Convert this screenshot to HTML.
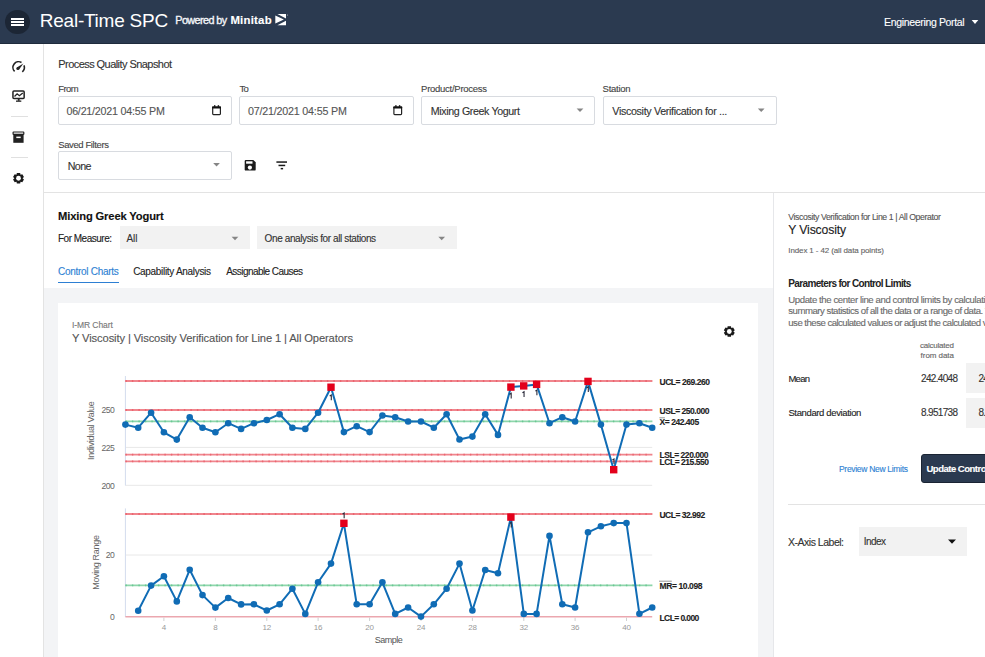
<!DOCTYPE html>
<html><head><meta charset="utf-8">
<style>
html,body{margin:0;padding:0;}
body{width:985px;height:657px;position:relative;overflow:hidden;background:#fff;font-family:"Liberation Sans", sans-serif;}
.a{position:absolute;box-sizing:border-box;}
.t{position:absolute;white-space:nowrap;font-family:"Liberation Sans", sans-serif;-webkit-text-stroke:0.12px currentColor;}
svg{position:absolute;left:0;top:0;}
</style></head><body>
<!-- header -->
<div class="a" style="left:0;top:0;width:985px;height:44px;background:#2b3a50;"></div>
<div class="a" style="left:0;top:43px;width:985px;height:1px;background:#1f2b3c;"></div>
<div class="a" style="left:5.3px;top:9.6px;width:24.8px;height:24.8px;border-radius:50%;background:#1c2635;"></div>
<div class="a" style="left:11px;top:17.6px;width:12.8px;height:2px;background:#fff;"></div>
<div class="a" style="left:11px;top:20.8px;width:12.8px;height:2px;background:#fff;"></div>
<div class="a" style="left:11px;top:24px;width:12.8px;height:2px;background:#fff;"></div>
<svg width="985" height="657" viewBox="0 0 985 657">
  <!-- minitab logo -->
  <path d="M275.3 15.6 L283.9 19.6 L275.3 23.6 Z" fill="#fff"/>
  <path d="M277.4 14 L286 14 L286 18.5 Z" fill="#fff"/>
  <path d="M277.4 25.2 L286 25.2 L286 20.7 Z" fill="#fff"/>
  <circle cx="287.6" cy="14.9" r="0.5" fill="#ccc"/>
  <!-- engineering portal caret -->
  <path d="M971.7 20 L978.3 20 L975 24.1 Z" fill="#fff"/>
</svg>

<!-- sidebar -->
<div class="a" style="left:43px;top:44px;width:1px;height:613px;background:#e3e3e3;"></div>
<div class="a" style="left:11px;top:116px;width:17px;height:1px;background:#e0e0e0;"></div>
<div class="a" style="left:11px;top:157px;width:17px;height:1px;background:#e0e0e0;"></div>

<!-- filter inputs -->
<div class="a" style="left:58px;top:96px;width:174px;height:29px;border:1px solid #d8dbe0;border-radius:2px;"></div>
<div class="a" style="left:239.3px;top:96px;width:174.7px;height:29px;border:1px solid #d8dbe0;border-radius:2px;"></div>
<div class="a" style="left:421px;top:96px;width:174px;height:29px;border:1px solid #d8dbe0;border-radius:2px;"></div>
<div class="a" style="left:602.5px;top:96px;width:174px;height:29px;border:1px solid #d8dbe0;border-radius:2px;"></div>
<div class="a" style="left:58px;top:151px;width:174px;height:29px;border:1px solid #d8dbe0;border-radius:2px;"></div>
<div class="a" style="left:44px;top:191.5px;width:941px;height:1px;background:#e3e3e3;"></div>

<!-- content -->
<div class="a" style="left:119.5px;top:226px;width:130.5px;height:23px;background:#f2f2f2;"></div>
<div class="a" style="left:257px;top:226px;width:200px;height:23px;background:#f2f2f2;"></div>
<div class="a" style="left:58px;top:281.6px;width:61px;height:1.8px;background:#2d7fd3;"></div>
<div class="a" style="left:44px;top:288px;width:729.5px;height:369px;background:#f3f4f6;"></div>
<div class="a" style="left:58px;top:302.5px;width:700px;height:355px;background:#fff;"></div>

<!-- right panel -->
<div class="a" style="left:773px;top:192.5px;width:1px;height:465px;background:#e6e7ea;"></div>
<div class="a" style="left:966px;top:363px;width:19px;height:30px;background:#f2f2f2;"></div>
<div class="a" style="left:966px;top:397.5px;width:19px;height:30px;background:#f2f2f2;"></div>
<div class="a" style="left:921.3px;top:453.7px;width:70px;height:29px;background:#2b3a50;border:1px solid #1a2433;border-radius:3px;"></div>
<div class="a" style="left:788px;top:504px;width:197px;height:1px;background:#e3e3e3;"></div>
<div class="a" style="left:858.5px;top:527px;width:108.5px;height:28.7px;background:#f2f2f2;"></div>

<div class="t" style="left:39.8px;top:10.82px;font-size:19px;line-height:19px;color:#ffffff;font-weight:400;letter-spacing:-0.247px;-webkit-text-stroke:0;">Real-Time SPC</div>
<div class="t" style="left:175.3px;top:15.26px;font-size:10.8px;line-height:10.8px;color:#f4f6f9;font-weight:400;letter-spacing:-0.580px;-webkit-text-stroke:0.35px currentColor;">Powered by</div>
<div class="t" style="left:230.4px;top:14.85px;font-size:11.4px;line-height:11.4px;color:#ffffff;font-weight:700;letter-spacing:0.223px;">Minitab</div>
<div class="t" style="left:884.1px;top:17.01px;font-size:10.5px;line-height:10.5px;color:#ffffff;font-weight:400;letter-spacing:-0.341px;">Engineering Portal</div>
<div class="t" style="left:58.3px;top:59.49px;font-size:11px;line-height:11px;color:#333333;font-weight:400;letter-spacing:-0.559px;">Process Quality Snapshot</div>
<div class="t" style="left:58.3px;top:84.26px;font-size:9.5px;line-height:9.5px;color:#444444;font-weight:400;letter-spacing:-0.621px;">From</div>
<div class="t" style="left:239.5px;top:84.26px;font-size:9.5px;line-height:9.5px;color:#444444;font-weight:400;letter-spacing:-0.833px;">To</div>
<div class="t" style="left:421.1px;top:84.26px;font-size:9.5px;line-height:9.5px;color:#444444;font-weight:400;letter-spacing:-0.264px;">Product/Process</div>
<div class="t" style="left:602.6px;top:84.26px;font-size:9.5px;line-height:9.5px;color:#444444;font-weight:400;letter-spacing:-0.263px;">Station</div>
<div class="t" style="left:66.4px;top:106.44px;font-size:10.7px;line-height:10.7px;color:#555555;font-weight:400;letter-spacing:-0.206px;">06/21/2021 04:55 PM</div>
<div class="t" style="left:247.9px;top:106.44px;font-size:10.7px;line-height:10.7px;color:#555555;font-weight:400;letter-spacing:-0.184px;">07/21/2021 04:55 PM</div>
<div class="t" style="left:430.8px;top:106.24px;font-size:10.7px;line-height:10.7px;color:#333333;font-weight:400;letter-spacing:-0.391px;">Mixing Greek Yogurt</div>
<div class="t" style="left:612.3px;top:106.24px;font-size:10.7px;line-height:10.7px;color:#333333;font-weight:400;letter-spacing:-0.329px;">Viscosity Verification for ...</div>
<div class="t" style="left:58.3px;top:140.06px;font-size:9.5px;line-height:9.5px;color:#444444;font-weight:400;letter-spacing:-0.403px;">Saved Filters</div>
<div class="t" style="left:67.7px;top:161.04px;font-size:10.7px;line-height:10.7px;color:#333333;font-weight:400;letter-spacing:-0.583px;">None</div>
<div class="t" style="left:58.0px;top:210.82px;font-size:11.2px;line-height:11.2px;color:#111111;font-weight:700;letter-spacing:-0.143px;">Mixing Greek Yogurt</div>
<div class="t" style="left:58.0px;top:233.94px;font-size:10px;line-height:10px;color:#222222;font-weight:400;letter-spacing:-0.497px;">For Measure:</div>
<div class="t" style="left:126.4px;top:234.23px;font-size:10px;line-height:10px;color:#333333;font-weight:400;letter-spacing:-0.057px;">All</div>
<div class="t" style="left:264.6px;top:234.23px;font-size:10px;line-height:10px;color:#333333;font-weight:400;letter-spacing:-0.385px;">One analysis for all stations</div>
<div class="t" style="left:58.0px;top:266.54px;font-size:10px;line-height:10px;color:#2d7fd3;font-weight:400;letter-spacing:-0.290px;">Control Charts</div>
<div class="t" style="left:133.2px;top:266.54px;font-size:10px;line-height:10px;color:#222222;font-weight:400;letter-spacing:-0.307px;">Capability Analysis</div>
<div class="t" style="left:226.2px;top:266.54px;font-size:10px;line-height:10px;color:#222222;font-weight:400;letter-spacing:-0.550px;">Assignable Causes</div>
<div class="t" style="left:71.9px;top:321.30px;font-size:8.5px;line-height:8.5px;color:#777777;font-weight:400;letter-spacing:-0.062px;">I-MR Chart</div>
<div class="t" style="left:72.0px;top:332.92px;font-size:11.2px;line-height:11.2px;color:#555555;font-weight:400;letter-spacing:-0.125px;">Y Viscosity | Viscosity Verification for Line 1 | All Operators</div>
<div class="t" style="left:788.3px;top:213.14px;font-size:8.7px;line-height:8.7px;color:#555555;font-weight:400;letter-spacing:-0.385px;">Viscosity Verification for Line 1 | All Operator</div>
<div class="t" style="left:788.3px;top:224.47px;font-size:12.2px;line-height:12.2px;color:#222222;font-weight:400;letter-spacing:-0.138px;">Y Viscosity</div>
<div class="t" style="left:788.3px;top:246.63px;font-size:8px;line-height:8px;color:#666666;font-weight:400;letter-spacing:-0.120px;">Index 1 - 42 (all data points)</div>
<div class="t" style="left:788.3px;top:278.84px;font-size:10px;line-height:10px;color:#222222;font-weight:700;letter-spacing:-0.648px;-webkit-text-stroke:0;">Parameters for Control Limits</div>
<div class="t" style="left:788.3px;top:294.77px;font-size:9.6px;line-height:9.6px;color:#6a6a6a;font-weight:400;letter-spacing:-0.403px;">Update the center line and control limits by calculating the</div>
<div class="t" style="left:788.3px;top:306.27px;font-size:9.6px;line-height:9.6px;color:#6a6a6a;font-weight:400;letter-spacing:-0.478px;">summary statistics of all the data or a range of data. You can</div>
<div class="t" style="left:788.3px;top:317.87px;font-size:9.6px;line-height:9.6px;color:#6a6a6a;font-weight:400;letter-spacing:-0.518px;">use these calculated values or adjust the calculated values</div>
<div class="t" style="left:920.0px;top:342.03px;font-size:8px;line-height:8px;color:#666666;font-weight:400;letter-spacing:-0.225px;">calculated</div>
<div class="t" style="left:920.6px;top:352.03px;font-size:8px;line-height:8px;color:#666666;font-weight:400;letter-spacing:-0.049px;">from data</div>
<div class="t" style="left:788.4px;top:373.66px;font-size:9.5px;line-height:9.5px;color:#222222;font-weight:400;letter-spacing:-0.688px;">Mean</div>
<div class="t" style="left:921.0px;top:374.24px;font-size:10px;line-height:10px;color:#333333;font-weight:400;letter-spacing:-0.673px;">242.4048</div>
<div class="t" style="left:788.4px;top:407.86px;font-size:9.5px;line-height:9.5px;color:#222222;font-weight:400;letter-spacing:-0.366px;">Standard deviation</div>
<div class="t" style="left:921.0px;top:407.84px;font-size:10px;line-height:10px;color:#333333;font-weight:400;letter-spacing:-0.673px;">8.951738</div>
<div class="t" style="left:978.4px;top:374.24px;font-size:10px;line-height:10px;color:#333333;font-weight:400;letter-spacing:-0.673px;">242.4048</div>
<div class="t" style="left:978.4px;top:407.84px;font-size:10px;line-height:10px;color:#333333;font-weight:400;letter-spacing:-0.673px;">8.951738</div>
<div class="t" style="left:839.0px;top:465.00px;font-size:8.5px;line-height:8.5px;color:#2d7fd3;font-weight:400;letter-spacing:-0.303px;">Preview New Limits</div>
<div class="t" style="left:926.5px;top:464.46px;font-size:9.5px;line-height:9.5px;color:#ffffff;font-weight:700;letter-spacing:-0.497px;">Update Control Limits</div>
<div class="t" style="left:788.0px;top:537.11px;font-size:10.5px;line-height:10.5px;color:#333333;font-weight:400;letter-spacing:-0.488px;">X-Axis Label:</div>
<div class="t" style="left:863.7px;top:537.33px;font-size:10px;line-height:10px;color:#333333;font-weight:400;letter-spacing:-0.541px;">Index</div>
<div class="t" style="left:659.5px;top:378.30px;font-size:8.5px;line-height:8.5px;color:#222222;font-weight:700;letter-spacing:-0.456px;">UCL= 269.260</div>
<div class="t" style="left:659.5px;top:407.10px;font-size:8.5px;line-height:8.5px;color:#222222;font-weight:700;letter-spacing:-0.456px;">USL= 250.000</div>
<div class="t" style="left:659.5px;top:418.40px;font-size:8.5px;line-height:8.5px;color:#222222;font-weight:700;letter-spacing:-0.456px;">X= 242.405</div>
<div class="t" style="left:659.5px;top:451.40px;font-size:8.5px;line-height:8.5px;color:#222222;font-weight:700;letter-spacing:-0.456px;">LSL= 220.000</div>
<div class="t" style="left:659.5px;top:458.10px;font-size:8.5px;line-height:8.5px;color:#222222;font-weight:700;letter-spacing:-0.456px;">LCL= 215.550</div>
<div class="t" style="left:659.5px;top:510.90px;font-size:8.5px;line-height:8.5px;color:#222222;font-weight:700;letter-spacing:-0.519px;">UCL= 32.992</div>
<div class="t" style="left:659.5px;top:582.40px;font-size:8.5px;line-height:8.5px;color:#222222;font-weight:700;letter-spacing:-0.394px;">MR= 10.098</div>
<div class="t" style="left:659.5px;top:613.70px;font-size:8.5px;line-height:8.5px;color:#222222;font-weight:700;letter-spacing:-0.591px;">LCL= 0.000</div>

<svg width="985" height="657" viewBox="0 0 985 657">
  <!-- select carets -->
  <path d="M576.65 108.6 L583.35 108.6 L580.00 112.1 Z" fill="#858585"/>
  <path d="M757.85 108.6 L764.55 108.6 L761.20 112.1 Z" fill="#858585"/>
  <path d="M213.20 162.9 L219.90 162.9 L216.55 166.4 Z" fill="#858585"/>
  <path d="M231.65 236.7 L238.35 236.7 L235.00 240.2 Z" fill="#858585"/>
  <path d="M438.35 236.7 L445.05 236.7 L441.70 240.2 Z" fill="#858585"/>
  <path d="M948.00 539.4 L956.00 539.4 L952.00 543.6999999999999 Z" fill="#111"/>
  <!-- calendar icons -->
  <g fill="none" stroke="#222" stroke-width="1.2">
    <path d="M212.7 107.5 h7.7 v6.3 a0.8 0.8 0 0 1 -0.8 0.8 h-6.1 a0.8 0.8 0 0 1 -0.8 -0.8 z"/>
    <path d="M393.9 107.5 h7.7 v6.3 a0.8 0.8 0 0 1 -0.8 0.8 h-6.1 a0.8 0.8 0 0 1 -0.8 -0.8 z"/>
  </g>
  <g fill="#111">
    <rect x="212.1" y="106.3" width="8.9" height="2.1" rx="0.6"/>
    <rect x="214.0" y="105.2" width="1.4" height="1.6"/><rect x="217.7" y="105.2" width="1.4" height="1.6"/>
    <rect x="393.3" y="106.3" width="8.9" height="2.1" rx="0.6"/>
    <rect x="395.2" y="105.2" width="1.4" height="1.6"/><rect x="398.9" y="105.2" width="1.4" height="1.6"/>
  </g>
  <!-- save icon -->
  <path d="M245.9 159.9 L253.3 159.9 L255.7 162.3 L255.7 169.4 Q255.7 170.6 254.5 170.6 L245.9 170.6 Q244.7 170.6 244.7 169.4 L244.7 161.1 Q244.7 159.9 245.9 159.9 Z" fill="#1a1a1a"/>
  <rect x="246.1" y="161.3" width="6.4" height="2.4" fill="#fff"/>
  <circle cx="249.9" cy="167.6" r="2.1" fill="#fff"/>
  <!-- filter icon -->
  <rect x="276.4" y="161.3" width="10.6" height="1.5" fill="#1a1a1a"/>
  <rect x="278.5" y="164.7" width="6.7" height="1.5" fill="#1a1a1a"/>
  <rect x="280.7" y="167.9" width="2.4" height="1.5" fill="#1a1a1a"/>
  <!-- sidebar icons -->
  <!-- gauge -->
  <g transform="translate(0,0.6)"><path d="M14.62 70.83 A5.7 5.7 0 0 1 21.5 61.86" fill="none" stroke="#222" stroke-width="1.6"/>
  <path d="M23.97 64.76 A5.7 5.7 0 0 1 22.31 71.17" fill="none" stroke="#222" stroke-width="1.6"/>
  <path d="M23.4 62.8 L18.9 69.1 L16.8 66.8 Z" fill="#222"/>
  <circle cx="17.85" cy="67.95" r="1.55" fill="#222"/></g>
  <!-- monitor -->
  <rect x="12.95" y="90.95" width="11.2" height="7.6" rx="1" fill="none" stroke="#222" stroke-width="1.5"/>
  <polyline points="14.5,96.5 17.1,93.8 19.4,95.7 22.8,93" fill="none" stroke="#222" stroke-width="1.3"/>
  <rect x="17.8" y="99" width="1.8" height="1.8" fill="#222"/>
  <rect x="16" y="100.5" width="5.3" height="1.3" fill="#222"/>
  <!-- archive -->
  <rect x="13.1" y="132" width="10.7" height="2.4" fill="#f4f4f4" stroke="#222" stroke-width="1.2" rx="0.5"/>
  <rect x="13.3" y="134.8" width="10.3" height="8" fill="#222"/>
  <rect x="16.3" y="136.6" width="4.4" height="1.5" fill="#fff"/>
  <!-- gear -->
  <g transform="translate(18.5,178.25)">
    <path d="M2.04 3.56 L1.65 5.35 L-1.65 5.35 L-2.04 3.56 L-2.06 3.54 L-3.81 4.11 L-5.46 1.24 L-4.10 0.01 L-4.10 -0.01 L-5.46 -1.24 L-3.81 -4.11 L-2.06 -3.54 L-2.04 -3.56 L-1.65 -5.35 L1.65 -5.35 L2.04 -3.56 L2.06 -3.54 L3.81 -4.11 L5.46 -1.24 L4.10 -0.01 L4.10 0.01 L5.46 1.24 L3.81 4.11 L2.06 3.54 Z" fill="#1a1a1a"/>
    <circle cx="0" cy="0" r="2.4" fill="#fff"/>
  </g>
  <!-- card gear -->
  <g transform="translate(729.3,331.5)">
    <path d="M2.04 3.56 L1.65 5.35 L-1.65 5.35 L-2.04 3.56 L-2.06 3.54 L-3.81 4.11 L-5.46 1.24 L-4.10 0.01 L-4.10 -0.01 L-5.46 -1.24 L-3.81 -4.11 L-2.06 -3.54 L-2.04 -3.56 L-1.65 -5.35 L1.65 -5.35 L2.04 -3.56 L2.06 -3.54 L3.81 -4.11 L5.46 -1.24 L4.10 -0.01 L4.10 0.01 L5.46 1.24 L3.81 4.11 L2.06 3.54 Z" fill="#1a1a1a"/>
    <circle cx="0" cy="0" r="2.4" fill="#fff"/>
  </g>
<line x1="125.4" y1="447.4" x2="652.2" y2="447.4" stroke="#e8e8e8" stroke-width="1"/>
<line x1="125.4" y1="485.3" x2="652.2" y2="485.3" stroke="#e8e8e8" stroke-width="1"/>
<line x1="125.4" y1="555.0" x2="652.2" y2="555.0" stroke="#e8e8e8" stroke-width="1"/>
<line x1="125.4" y1="376" x2="125.4" y2="485.5" stroke="#d3dced" stroke-width="1"/>
<line x1="125.4" y1="508.4" x2="125.4" y2="617" stroke="#d3dced" stroke-width="1"/>
<line x1="125.4" y1="381.0" x2="652.2" y2="381.0" stroke="#f0858d" stroke-width="1.8"/>
<line x1="125.4" y1="381.0" x2="652.2" y2="381.0" stroke="#ec6570" stroke-width="1.8" stroke-dasharray="1.4 5.1"/>
<line x1="125.4" y1="410.0" x2="652.2" y2="410.0" stroke="#f0858d" stroke-width="1.8"/>
<line x1="125.4" y1="410.0" x2="652.2" y2="410.0" stroke="#ec6570" stroke-width="1.8" stroke-dasharray="1.4 5.1"/>
<line x1="125.4" y1="454.7" x2="652.2" y2="454.7" stroke="#f0858d" stroke-width="1.8"/>
<line x1="125.4" y1="454.7" x2="652.2" y2="454.7" stroke="#ec6570" stroke-width="1.8" stroke-dasharray="1.4 5.1"/>
<line x1="125.4" y1="461.3" x2="652.2" y2="461.3" stroke="#f0858d" stroke-width="1.8"/>
<line x1="125.4" y1="461.3" x2="652.2" y2="461.3" stroke="#ec6570" stroke-width="1.8" stroke-dasharray="1.4 5.1"/>
<line x1="125.4" y1="514.0" x2="652.2" y2="514.0" stroke="#f0858d" stroke-width="1.8"/>
<line x1="125.4" y1="514.0" x2="652.2" y2="514.0" stroke="#ec6570" stroke-width="1.8" stroke-dasharray="1.4 5.1"/>
<line x1="125.4" y1="421.3" x2="652.2" y2="421.3" stroke="#8ed6ab" stroke-width="1.8"/>
<line x1="125.4" y1="421.3" x2="652.2" y2="421.3" stroke="#6ac793" stroke-width="1.8" stroke-dasharray="1.4 5.1"/>
<line x1="125.4" y1="585.4" x2="652.2" y2="585.4" stroke="#8ed6ab" stroke-width="1.8"/>
<line x1="125.4" y1="585.4" x2="652.2" y2="585.4" stroke="#6ac793" stroke-width="1.8" stroke-dasharray="1.4 5.1"/>
<line x1="125.4" y1="616.8" x2="652.2" y2="616.8" stroke="#eba7af" stroke-width="1.6"/>
<line x1="163.9" y1="617.5" x2="163.9" y2="621" stroke="#d0d0d0" stroke-width="1"/>
<line x1="215.4" y1="617.5" x2="215.4" y2="621" stroke="#d0d0d0" stroke-width="1"/>
<line x1="266.8" y1="617.5" x2="266.8" y2="621" stroke="#d0d0d0" stroke-width="1"/>
<line x1="318.1" y1="617.5" x2="318.1" y2="621" stroke="#d0d0d0" stroke-width="1"/>
<line x1="369.6" y1="617.5" x2="369.6" y2="621" stroke="#d0d0d0" stroke-width="1"/>
<line x1="421.0" y1="617.5" x2="421.0" y2="621" stroke="#d0d0d0" stroke-width="1"/>
<line x1="472.4" y1="617.5" x2="472.4" y2="621" stroke="#d0d0d0" stroke-width="1"/>
<line x1="523.8" y1="617.5" x2="523.8" y2="621" stroke="#d0d0d0" stroke-width="1"/>
<line x1="575.1" y1="617.5" x2="575.1" y2="621" stroke="#d0d0d0" stroke-width="1"/>
<line x1="626.5" y1="617.5" x2="626.5" y2="621" stroke="#d0d0d0" stroke-width="1"/>
<polyline points="125.4,424.6 138.2,427.7 151.1,412.7 163.9,432.3 176.8,439.6 189.7,417.2 202.5,427.7 215.4,432.3 228.2,423.2 241.1,428.9 253.9,423.2 266.8,420.0 279.6,414.2 292.4,427.7 305.3,428.9 318.1,412.7 331.0,387.2 343.9,432.1 356.7,426.2 369.6,432.1 382.4,415.5 395.2,417.2 408.1,421.5 421.0,421.5 433.8,427.7 446.6,414.2 459.5,439.5 472.4,436.6 485.2,414.2 498.0,434.9 510.9,387.1 523.8,385.9 536.6,384.4 549.5,423.2 562.3,417.2 575.1,421.5 588.0,381.4 600.9,424.6 613.7,469.7 626.5,424.6 639.4,423.2 652.2,427.7" fill="none" stroke="#106cb5" stroke-width="2" stroke-linejoin="round"/>
<polyline points="138.2,610.7 151.1,585.6 163.9,576.3 176.8,601.4 189.7,569.8 202.5,595.1 215.4,607.6 228.2,598.0 241.1,604.4 253.9,604.3 266.8,610.5 279.6,604.3 292.4,588.7 305.3,613.9 318.1,582.3 331.0,563.6 343.9,523.3 356.7,604.3 369.6,604.3 382.4,582.3 395.2,613.9 408.1,607.5 421.0,616.6 433.8,604.3 446.6,588.7 459.5,563.6 472.4,610.5 485.2,570.0 498.0,573.2 510.9,517.1 523.8,613.9 536.6,613.9 549.5,535.9 562.3,604.3 575.1,607.5 588.0,532.3 600.9,526.3 613.7,523.1 626.5,523.1 639.4,613.8 652.2,607.5" fill="none" stroke="#106cb5" stroke-width="2" stroke-linejoin="round"/>
<circle cx="125.4" cy="424.6" r="3.3" fill="#106cb5"/>
<circle cx="138.2" cy="427.7" r="3.3" fill="#106cb5"/>
<circle cx="151.1" cy="412.7" r="3.3" fill="#106cb5"/>
<circle cx="163.9" cy="432.3" r="3.3" fill="#106cb5"/>
<circle cx="176.8" cy="439.6" r="3.3" fill="#106cb5"/>
<circle cx="189.7" cy="417.2" r="3.3" fill="#106cb5"/>
<circle cx="202.5" cy="427.7" r="3.3" fill="#106cb5"/>
<circle cx="215.4" cy="432.3" r="3.3" fill="#106cb5"/>
<circle cx="228.2" cy="423.2" r="3.3" fill="#106cb5"/>
<circle cx="241.1" cy="428.9" r="3.3" fill="#106cb5"/>
<circle cx="253.9" cy="423.2" r="3.3" fill="#106cb5"/>
<circle cx="266.8" cy="420.0" r="3.3" fill="#106cb5"/>
<circle cx="279.6" cy="414.2" r="3.3" fill="#106cb5"/>
<circle cx="292.4" cy="427.7" r="3.3" fill="#106cb5"/>
<circle cx="305.3" cy="428.9" r="3.3" fill="#106cb5"/>
<circle cx="318.1" cy="412.7" r="3.3" fill="#106cb5"/>
<rect x="327.3" y="383.5" width="7.4" height="7.4" fill="#e3001b"/>
<circle cx="343.9" cy="432.1" r="3.3" fill="#106cb5"/>
<circle cx="356.7" cy="426.2" r="3.3" fill="#106cb5"/>
<circle cx="369.6" cy="432.1" r="3.3" fill="#106cb5"/>
<circle cx="382.4" cy="415.5" r="3.3" fill="#106cb5"/>
<circle cx="395.2" cy="417.2" r="3.3" fill="#106cb5"/>
<circle cx="408.1" cy="421.5" r="3.3" fill="#106cb5"/>
<circle cx="421.0" cy="421.5" r="3.3" fill="#106cb5"/>
<circle cx="433.8" cy="427.7" r="3.3" fill="#106cb5"/>
<circle cx="446.6" cy="414.2" r="3.3" fill="#106cb5"/>
<circle cx="459.5" cy="439.5" r="3.3" fill="#106cb5"/>
<circle cx="472.4" cy="436.6" r="3.3" fill="#106cb5"/>
<circle cx="485.2" cy="414.2" r="3.3" fill="#106cb5"/>
<circle cx="498.0" cy="434.9" r="3.3" fill="#106cb5"/>
<rect x="507.2" y="383.4" width="7.4" height="7.4" fill="#e3001b"/>
<rect x="520.0" y="382.2" width="7.4" height="7.4" fill="#e3001b"/>
<rect x="532.9" y="380.7" width="7.4" height="7.4" fill="#e3001b"/>
<circle cx="549.5" cy="423.2" r="3.3" fill="#106cb5"/>
<circle cx="562.3" cy="417.2" r="3.3" fill="#106cb5"/>
<circle cx="575.1" cy="421.5" r="3.3" fill="#106cb5"/>
<rect x="584.3" y="377.7" width="7.4" height="7.4" fill="#e3001b"/>
<circle cx="600.9" cy="424.6" r="3.3" fill="#106cb5"/>
<rect x="610.0" y="466.0" width="7.4" height="7.4" fill="#e3001b"/>
<circle cx="626.5" cy="424.6" r="3.3" fill="#106cb5"/>
<circle cx="639.4" cy="423.2" r="3.3" fill="#106cb5"/>
<circle cx="652.2" cy="427.7" r="3.3" fill="#106cb5"/>
<circle cx="138.2" cy="610.7" r="3.3" fill="#106cb5"/>
<circle cx="151.1" cy="585.6" r="3.3" fill="#106cb5"/>
<circle cx="163.9" cy="576.3" r="3.3" fill="#106cb5"/>
<circle cx="176.8" cy="601.4" r="3.3" fill="#106cb5"/>
<circle cx="189.7" cy="569.8" r="3.3" fill="#106cb5"/>
<circle cx="202.5" cy="595.1" r="3.3" fill="#106cb5"/>
<circle cx="215.4" cy="607.6" r="3.3" fill="#106cb5"/>
<circle cx="228.2" cy="598.0" r="3.3" fill="#106cb5"/>
<circle cx="241.1" cy="604.4" r="3.3" fill="#106cb5"/>
<circle cx="253.9" cy="604.3" r="3.3" fill="#106cb5"/>
<circle cx="266.8" cy="610.5" r="3.3" fill="#106cb5"/>
<circle cx="279.6" cy="604.3" r="3.3" fill="#106cb5"/>
<circle cx="292.4" cy="588.7" r="3.3" fill="#106cb5"/>
<circle cx="305.3" cy="613.9" r="3.3" fill="#106cb5"/>
<circle cx="318.1" cy="582.3" r="3.3" fill="#106cb5"/>
<circle cx="331.0" cy="563.6" r="3.3" fill="#106cb5"/>
<rect x="340.2" y="519.6" width="7.4" height="7.4" fill="#e3001b"/>
<circle cx="356.7" cy="604.3" r="3.3" fill="#106cb5"/>
<circle cx="369.6" cy="604.3" r="3.3" fill="#106cb5"/>
<circle cx="382.4" cy="582.3" r="3.3" fill="#106cb5"/>
<circle cx="395.2" cy="613.9" r="3.3" fill="#106cb5"/>
<circle cx="408.1" cy="607.5" r="3.3" fill="#106cb5"/>
<circle cx="421.0" cy="616.6" r="3.3" fill="#106cb5"/>
<circle cx="433.8" cy="604.3" r="3.3" fill="#106cb5"/>
<circle cx="446.6" cy="588.7" r="3.3" fill="#106cb5"/>
<circle cx="459.5" cy="563.6" r="3.3" fill="#106cb5"/>
<circle cx="472.4" cy="610.5" r="3.3" fill="#106cb5"/>
<circle cx="485.2" cy="570.0" r="3.3" fill="#106cb5"/>
<circle cx="498.0" cy="573.2" r="3.3" fill="#106cb5"/>
<rect x="507.2" y="513.4" width="7.4" height="7.4" fill="#e3001b"/>
<circle cx="523.8" cy="613.9" r="3.3" fill="#106cb5"/>
<circle cx="536.6" cy="613.9" r="3.3" fill="#106cb5"/>
<circle cx="549.5" cy="535.9" r="3.3" fill="#106cb5"/>
<circle cx="562.3" cy="604.3" r="3.3" fill="#106cb5"/>
<circle cx="575.1" cy="607.5" r="3.3" fill="#106cb5"/>
<circle cx="588.0" cy="532.3" r="3.3" fill="#106cb5"/>
<circle cx="600.9" cy="526.3" r="3.3" fill="#106cb5"/>
<circle cx="613.7" cy="523.1" r="3.3" fill="#106cb5"/>
<circle cx="626.5" cy="523.1" r="3.3" fill="#106cb5"/>
<circle cx="639.4" cy="613.8" r="3.3" fill="#106cb5"/>
<circle cx="652.2" cy="607.5" r="3.3" fill="#106cb5"/>
<path d="M329.70 396.00 L331.30 395.00 L331.30 400.20" fill="none" stroke="#2a2a3a" stroke-width="1.1"/>
<path d="M509.60 394.20 L511.20 393.20 L511.20 398.40" fill="none" stroke="#2a2a3a" stroke-width="1.1"/>
<path d="M522.45 392.70 L524.05 391.70 L524.05 396.90" fill="none" stroke="#2a2a3a" stroke-width="1.1"/>
<path d="M535.30 391.10 L536.90 390.10 L536.90 395.30" fill="none" stroke="#2a2a3a" stroke-width="1.1"/>
<path d="M586.70 387.70 L588.30 386.70 L588.30 391.90" fill="none" stroke="#2a2a3a" stroke-width="1.1"/>
<path d="M612.40 459.90 L614.00 458.90 L614.00 464.10" fill="none" stroke="#2a2a3a" stroke-width="1.1"/>
<path d="M342.55 514.00 L344.15 513.00 L344.15 518.20" fill="none" stroke="#2a2a3a" stroke-width="1.1"/>
<path d="M509.60 523.40 L511.20 522.40 L511.20 527.60" fill="none" stroke="#2a2a3a" stroke-width="1.1"/>
<text x="114.4" y="413.3" font-size="8.6" letter-spacing="-0.45" font-family="Liberation Sans" fill="#666" text-anchor="end">250</text>
<text x="114.4" y="450.8" font-size="8.6" letter-spacing="-0.45" font-family="Liberation Sans" fill="#666" text-anchor="end">225</text>
<text x="114.4" y="488.8" font-size="8.6" letter-spacing="-0.45" font-family="Liberation Sans" fill="#666" text-anchor="end">200</text>
<text x="114.4" y="558.2" font-size="8.6" letter-spacing="-0.45" font-family="Liberation Sans" fill="#666" text-anchor="end">20</text>
<text x="114.4" y="620.2" font-size="8.6" letter-spacing="-0.45" font-family="Liberation Sans" fill="#666" text-anchor="end">0</text>
<text x="163.9" y="630.4" font-size="8" letter-spacing="-0.2" font-family="Liberation Sans" fill="#999" text-anchor="middle">4</text>
<text x="215.4" y="630.4" font-size="8" letter-spacing="-0.2" font-family="Liberation Sans" fill="#999" text-anchor="middle">8</text>
<text x="266.8" y="630.4" font-size="8" letter-spacing="-0.2" font-family="Liberation Sans" fill="#999" text-anchor="middle">12</text>
<text x="318.1" y="630.4" font-size="8" letter-spacing="-0.2" font-family="Liberation Sans" fill="#999" text-anchor="middle">16</text>
<text x="369.6" y="630.4" font-size="8" letter-spacing="-0.2" font-family="Liberation Sans" fill="#999" text-anchor="middle">20</text>
<text x="421.0" y="630.4" font-size="8" letter-spacing="-0.2" font-family="Liberation Sans" fill="#999" text-anchor="middle">24</text>
<text x="472.4" y="630.4" font-size="8" letter-spacing="-0.2" font-family="Liberation Sans" fill="#999" text-anchor="middle">28</text>
<text x="523.8" y="630.4" font-size="8" letter-spacing="-0.2" font-family="Liberation Sans" fill="#999" text-anchor="middle">32</text>
<text x="575.1" y="630.4" font-size="8" letter-spacing="-0.2" font-family="Liberation Sans" fill="#999" text-anchor="middle">36</text>
<text x="626.5" y="630.4" font-size="8" letter-spacing="-0.2" font-family="Liberation Sans" fill="#999" text-anchor="middle">40</text>
<text x="374.7" y="643.4" font-size="9" letter-spacing="-0.5" font-family="Liberation Sans" fill="#555">Sample</text>
<text transform="translate(93.9,430.7) rotate(-90)" font-size="9" letter-spacing="-0.27" font-family="Liberation Sans" fill="#666" text-anchor="middle">Individual Value</text>
<text transform="translate(99.0,562.6) rotate(-90)" font-size="9" letter-spacing="-0.3" font-family="Liberation Sans" fill="#666" text-anchor="middle">Moving Range</text>
<line x1="659.4" y1="417.8" x2="664.9" y2="417.8" stroke="#8a8a8a" stroke-width="0.9"/>
<line x1="659.0" y1="581.2" x2="671.8" y2="581.2" stroke="#8a8a8a" stroke-width="0.9"/>
</svg>
</body></html>
